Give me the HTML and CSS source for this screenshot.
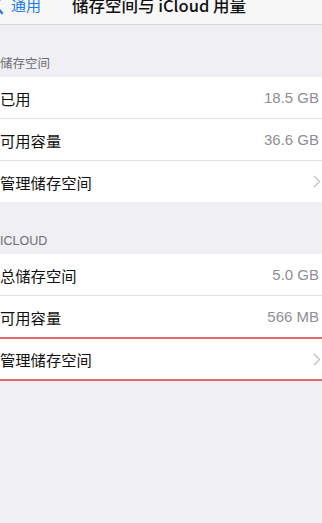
FILE: index.html
```html
<!DOCTYPE html>
<html lang="zh">
<head>
<meta charset="utf-8">
<link rel="stylesheet" href="styles.css">
</head>
<body>
<div class="screen">
  <header class="navbar">
    <div class="back">
      <svg class="back-chev" width="12" height="20" viewBox="0 0 12 20"><path d="M9 2 L1.5 10 L9 18" fill="none" stroke="#1a7cf0" stroke-width="2.4" stroke-linecap="round" stroke-linejoin="round"/></svg>
      <span>通用</span>
    </div>
    <div class="title">储存空间与 iCloud 用量</div>
  </header>

  <div class="section-header first">储存空间</div>
  <div class="group">
    <div class="row"><span class="label">已用</span><span class="value">18.5 GB</span></div>
    <div class="row"><span class="label">可用容量</span><span class="value">36.6 GB</span></div>
    <div class="row"><span class="label">管理储存空间</span><span class="chev"><svg width="8" height="13" viewBox="0 0 8 13"><path d="M1 1 L6.5 6.5 L1 12" fill="none" stroke="#c7c7cc" stroke-width="1.5"/></svg></span></div>
  </div>

  <div class="section-header">ICLOUD</div>
  <div class="group">
    <div class="row"><span class="label">总储存空间</span><span class="value">5.0 GB</span></div>
    <div class="row"><span class="label">可用容量</span><span class="value">566 MB</span></div>
    <div class="row highlight"><span class="label">管理储存空间</span><span class="chev"><svg width="8" height="13" viewBox="0 0 8 13"><path d="M1 1 L6.5 6.5 L1 12" fill="none" stroke="#c7c7cc" stroke-width="1.5"/></svg></span></div>
  </div>
</div>
</body>
</html>
```

FILE: styles.css
```css
* { box-sizing: border-box; }
html, body { margin: 0; padding: 0; }
body {
  background: #efeff4;
  font-family: "Liberation Sans", "Noto Sans CJK SC", sans-serif;
  width: 322px;
  height: 523px;
  overflow: hidden;
}
.screen { width: 322px; }
.navbar {
  height: 25px;
  background: #f7f7f8;
  border-bottom: 1px solid #d6d6d9;
  display: flex;
  align-items: flex-end;
  padding-bottom: 9px;
  position: relative;
  overflow: hidden;
}
.back {
  display: flex;
  align-items: center;
  color: #1a7cf0;
  font-family: "Noto Sans CJK SC", sans-serif;
  font-size: 15px;
  line-height: 20px;
  margin-left: -7px;
}
.back-chev { margin-right: 6px; }
.title {
  position: absolute;
  left: 0;
  right: 0;
  bottom: 9px;
  text-align: center;
  font-family: "Noto Sans CJK SC", sans-serif;
  font-weight: 500;
  font-size: 16.5px;
  line-height: 20px;
  color: #111;
  padding-right: 4px;
}
.section-header {
  font-family: "Noto Sans CJK SC", sans-serif;
  font-size: 12.5px;
  line-height: 16px;
  color: #6d6d72;
  padding: 30px 0 6px 0;
}
.section-header:not(.first) { padding: 31px 0 5px 0; font-family: "Liberation Sans", sans-serif; font-size: 12.5px; }
.group { background: #fff; }
.row {
  height: 42px;
  display: flex;
  align-items: center;
  justify-content: space-between;
  padding: 0 3px 0 0;
  border-top: 1px solid #e1e1e4;
}
.row:first-child { border-top: none; height: 41px; }
.label {
  font-family: "Noto Sans CJK SC", sans-serif;
  font-size: 15.3px;
  color: #111;
  letter-spacing: 0;
}
.value {
  font-family: "Liberation Sans", sans-serif;
  font-size: 15px;
  color: #8e8e93;
}
.chev { display: flex; align-items: center; margin-right: -2px; }
.highlight {
  border-top: 2px solid #e06a6c;
  border-bottom: 2px solid #e06a6c;
  height: 44px;
}
```
